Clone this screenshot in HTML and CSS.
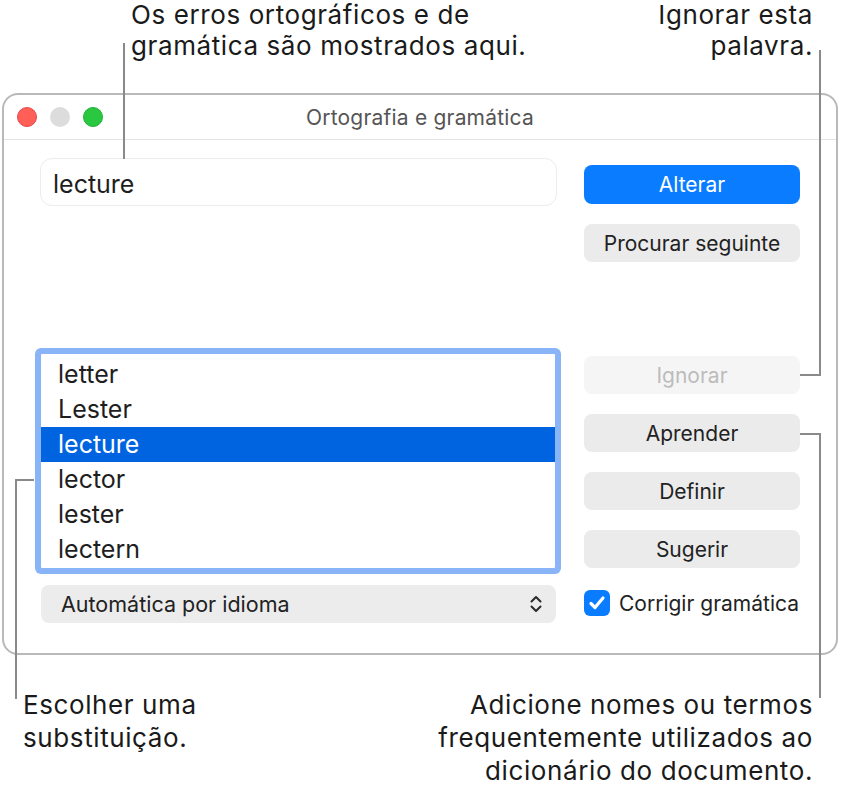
FILE: index.html
```html
<!DOCTYPE html>
<html lang="pt">
<head>
<meta charset="utf-8">
<title>Ortografia e gramática</title>
<link rel="stylesheet" href="styles.css">
</head>
<body>
<div class="page">
  <div class="window">
    <div class="titlebar">
      <div class="lights">
        <span class="light red"></span>
        <span class="light gray"></span>
        <span class="light green"></span>
      </div>
      <div class="title">Ortografia e gramática</div>
      <div></div>
    </div>
    <div class="content">
      <div class="left">
        <div class="field">lecture</div>
        <ul class="list">
          <li>letter</li>
          <li>Lester</li>
          <li class="selected">lecture</li>
          <li>lector</li>
          <li>lester</li>
          <li>lectern</li>
        </ul>
        <div class="popup">
          <span>Automática por idioma</span>
          <svg class="chev" width="14" height="18" viewBox="0 0 14 18"><path d="M2.5 6.5 L7 2 L11.5 6.5 M2.5 11.5 L7 16 L11.5 11.5" fill="none" stroke="#2a2a2a" stroke-width="2" stroke-linecap="round" stroke-linejoin="round"/></svg>
        </div>
      </div>
      <div class="right">
        <button class="btn primary">Alterar</button>
        <button class="btn">Procurar seguinte</button>
        <button class="btn disabled gap-big">Ignorar</button>
        <button class="btn">Aprender</button>
        <button class="btn">Definir</button>
        <button class="btn">Sugerir</button>
        <label class="check">
          <span class="box"><svg width="20" height="18" viewBox="0 0 20 18"><path d="M4 9.5 L8 13.5 L16 4" fill="none" stroke="#fff" stroke-width="3.2" stroke-linecap="round" stroke-linejoin="round"/></svg></span>
          <span>Corrigir gramática</span>
        </label>
      </div>
    </div>
  </div>

  <div class="note note-tl">Os erros ortográficos e de<br>gramática são mostrados aqui.</div>
  <div class="note note-tr">Ignorar esta<br>palavra.</div>
  <div class="note note-bl">Escolher uma<br>substituição.</div>
  <div class="note note-br">Adicione nomes ou termos<br>frequentemente utilizados ao<br>dicionário do documento.</div>

  <span class="ln v l1"></span>
  <span class="ln v l2"></span>
  <span class="ln h l3"></span>
  <span class="ln h l4"></span>
  <span class="ln v l5"></span>
  <span class="ln h l6"></span>
  <span class="ln v l7"></span>
</div>
</body>
</html>
```

FILE: styles.css
```css
* { box-sizing: border-box; }
html, body { margin: 0; padding: 0; background: #fff; }
body { font-family: Inter, "Noto Sans", sans-serif; color: #222; }

.page {
  position: relative;
  width: 843px;
  height: 793px;
  overflow: hidden;
}

.window {
  margin: 93px 0 0 2px;
  width: 836px;
  height: 562px;
  border: 2px solid #b9b9b9;
  border-radius: 16px;
  background: #fff;
}

.titlebar {
  height: 45px;
  border-bottom: 1px solid #e4e4e4;
  display: grid;
  grid-template-columns: 1fr auto 1fr;
  align-items: center;
}
.lights { display: flex; gap: 13px; padding-left: 13px; }
.light { width: 20px; height: 20px; border-radius: 50%; display: block; }
.red { background: #ff5f57; border: 1px solid #e5484d; }
.gray { background: #dcdcdc; }
.green { background: #2ac840; border: 1px solid #22b035; }
.title { font-size: 21px; color: #555; letter-spacing: 0.2px; }

.content {
  display: grid;
  grid-template-columns: 517px 216px;
  column-gap: 27px;
  padding: 18px 36px 0 36px;
}

.left { display: flex; flex-direction: column; }
.field {
  height: 48px;
  border: 1px solid #ececec;
  border-radius: 12px;
  font-size: 25px;
  padding: 3px 0 0 12px;
  display: flex;
  align-items: center;
  color: #1e1e1e;
}

.list {
  list-style: none;
  margin: 147px 1px 0 0;
  padding: 3px 0 0 0;
  height: 216px;
  border: 1px solid #8ab4f8;
  box-shadow: 0 0 0 5px #8ab4f8;
  border-radius: 2px;
  background: #fff;
}
.list li {
  height: 35px;
  line-height: 35px;
  font-size: 25px;
  padding-left: 17px;
  color: #1e1e1e;
}
.list li.selected { background: #0064e1; color: #fff; }

.popup {
  margin: 16px 1px 0 1px;
  height: 38px;
  border-radius: 8px;
  background: #ececec;
  display: flex;
  align-items: center;
  justify-content: space-between;
  padding: 0 13px 0 20px;
  font-size: 21.5px;
  color: #222;
}
.chev { display: block; }

.right { display: flex; flex-direction: column; padding-top: 7px; }
.btn {
  height: 38px;
  border: none;
  border-radius: 8px;
  background: #ebebeb;
  font-family: inherit;
  font-size: 21px;
  color: #222;
  margin-top: 20px;
  padding: 0;
}
.btn.primary { margin-top: 0; height: 39px; background: #0a7cff; color: #fff; }
.btn.gap-big { margin-top: 94px; }
.btn.disabled { background: #f5f5f5; color: #bcbcbc; }

.check {
  margin-top: 22px;
  display: flex;
  align-items: center;
  gap: 9px;
  font-size: 21px;
  color: #222;
}
.box {
  flex: none;
  width: 26px; height: 26px;
  border-radius: 6px;
  background: #0a7cff;
  display: flex; align-items: center; justify-content: center;
}

.note {
  position: absolute;
  font-size: 26px;
  letter-spacing: 0.6px;
  color: #1a1a1a;
  white-space: nowrap;
}
.note-tl { left: 131px; top: -1px; line-height: 31px; }
.note-tr { right: 30px; top: -1px; line-height: 31px; text-align: right; }
.note-bl { left: 23px; top: 688px; line-height: 33px; }
.note-br { right: 30px; top: 688px; line-height: 33px; text-align: right; }

.ln { position: absolute; background: #8a8a8a; display: block; }
.ln.v { width: 2px; }
.ln.h { height: 2px; }
.l1 { left: 123px; top: 43px; height: 116px; }
.l2 { left: 819px; top: 50px; height: 326px; }
.l3 { left: 800px; top: 374px; width: 21px; }
.l4 { left: 800px; top: 433px; width: 21px; }
.l5 { left: 819px; top: 433px; height: 265px; }
.l6 { left: 15px; top: 479px; width: 19px; }
.l7 { left: 15px; top: 479px; height: 220px; }
```
